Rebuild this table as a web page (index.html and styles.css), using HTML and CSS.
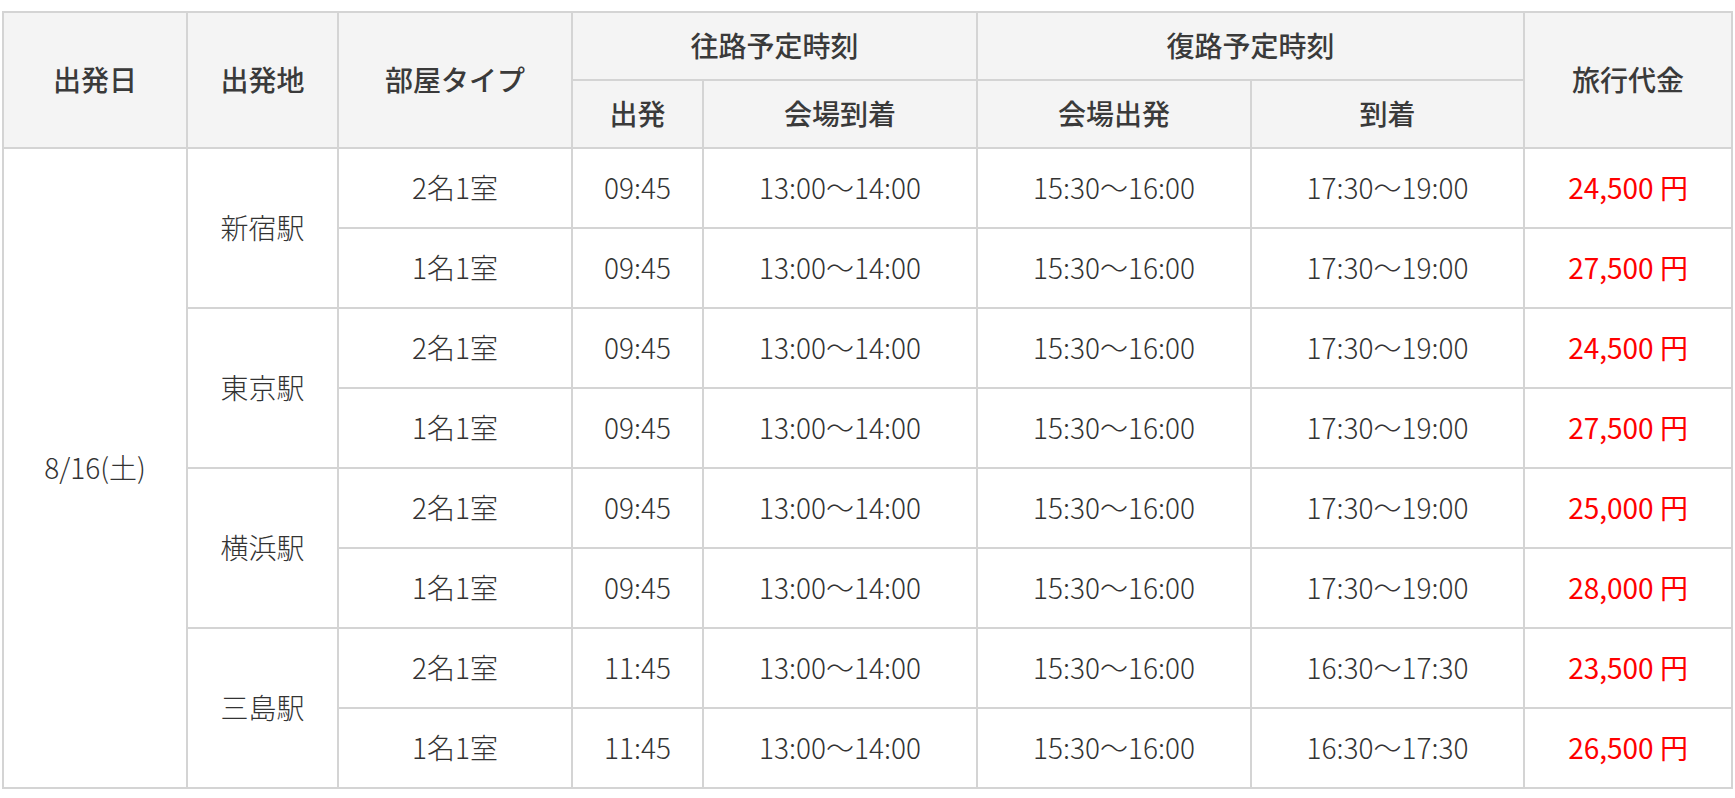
FILE: index.html
```html
<!DOCTYPE html>
<html lang="ja">
<head>
<meta charset="utf-8">
<title>ツアー日程</title>
<link rel="stylesheet" href="styles.css">
</head>
<body>
<table class="schedule">
  <colgroup>
    <col class="c-date">
    <col class="c-place">
    <col class="c-room">
    <col class="c-dep">
    <col class="c-arr">
    <col class="c-rdep">
    <col class="c-rarr">
    <col class="c-price">
  </colgroup>
  <thead>
    <tr class="h1">
      <th rowspan="2">出発日</th>
      <th rowspan="2">出発地</th>
      <th rowspan="2">部屋タイプ</th>
      <th colspan="2">往路予定時刻</th>
      <th colspan="2">復路予定時刻</th>
      <th rowspan="2">旅行代金</th>
    </tr>
    <tr class="h2">
      <th>出発</th>
      <th>会場到着</th>
      <th>会場出発</th>
      <th>到着</th>
    </tr>
  </thead>
  <tbody>
    <tr>
      <td rowspan="8">8/16(土)</td>
      <td rowspan="2">新宿駅</td>
      <td>2名1室</td><td>09:45</td><td>13:00〜14:00</td><td>15:30〜16:00</td><td>17:30〜19:00</td><td class="price">24,500 円</td>
    </tr>
    <tr>
      <td>1名1室</td><td>09:45</td><td>13:00〜14:00</td><td>15:30〜16:00</td><td>17:30〜19:00</td><td class="price">27,500 円</td>
    </tr>
    <tr>
      <td rowspan="2">東京駅</td>
      <td>2名1室</td><td>09:45</td><td>13:00〜14:00</td><td>15:30〜16:00</td><td>17:30〜19:00</td><td class="price">24,500 円</td>
    </tr>
    <tr>
      <td>1名1室</td><td>09:45</td><td>13:00〜14:00</td><td>15:30〜16:00</td><td>17:30〜19:00</td><td class="price">27,500 円</td>
    </tr>
    <tr>
      <td rowspan="2">横浜駅</td>
      <td>2名1室</td><td>09:45</td><td>13:00〜14:00</td><td>15:30〜16:00</td><td>17:30〜19:00</td><td class="price">25,000 円</td>
    </tr>
    <tr>
      <td>1名1室</td><td>09:45</td><td>13:00〜14:00</td><td>15:30〜16:00</td><td>17:30〜19:00</td><td class="price">28,000 円</td>
    </tr>
    <tr>
      <td rowspan="2">三島駅</td>
      <td>2名1室</td><td>11:45</td><td>13:00〜14:00</td><td>15:30〜16:00</td><td>16:30〜17:30</td><td class="price">23,500 円</td>
    </tr>
    <tr>
      <td>1名1室</td><td>11:45</td><td>13:00〜14:00</td><td>15:30〜16:00</td><td>16:30〜17:30</td><td class="price">26,500 円</td>
    </tr>
  </tbody>
</table>
</body>
</html>
```
FILE: styles.css
```css
html, body {
  margin: 0;
  padding: 0;
  background: #ffffff;
}

body {
  padding: 11px 0 0 2px;
  font-family: "Noto Sans CJK JP", "Noto Sans", sans-serif;
  color: #333333;
}

.schedule {
  border-collapse: collapse;
  table-layout: fixed;
  width: 1731px;
  font-size: 28px;
  line-height: 1.4;
}

.c-date { width: 184px; }
.c-place { width: 151px; }
.c-room { width: 234px; }
.c-dep { width: 131px; }
.c-arr { width: 274px; }
.c-rdep { width: 274px; }
.c-rarr { width: 273px; }
.c-price { width: auto; }

.schedule th,
.schedule td {
  border: 2px solid #d4d4d4;
  text-align: center;
  vertical-align: middle;
  padding: 0;
}

.schedule th {
  background: #f4f4f4;
  font-weight: 500;
  color: #3a3a3a;
  height: 66px;
}

.schedule td {
  font-weight: 300;
  height: 78px;
}

.schedule td.price {
  color: #ff0000;
  font-weight: 400;
}
```
